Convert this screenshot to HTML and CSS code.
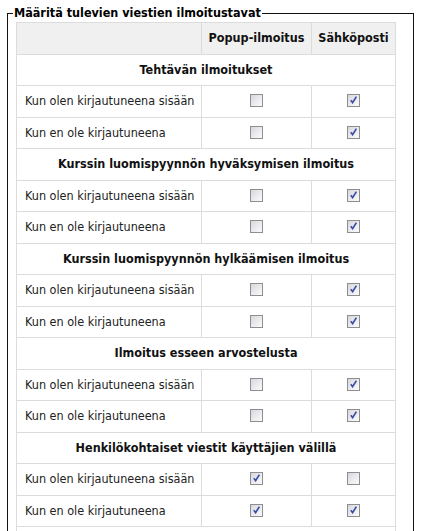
FILE: index.html
```html
<!DOCTYPE html>
<html lang="fi">
<head>
<meta charset="utf-8">
<title>Ilmoitusasetukset</title>
<link rel="stylesheet" href="styles.css">
</head>
<body>
<fieldset class="prefs">
  <legend class="prefs-legend">Määritä tulevien viestien ilmoitustavat</legend>
  <table class="grid">
    <colgroup>
      <col class="c-label">
      <col class="c-popup">
      <col class="c-mail">
    </colgroup>
    <thead>
      <tr class="head-row">
        <th></th>
        <th>Popup-ilmoitus</th>
        <th>Sähköposti</th>
      </tr>
    </thead>
    <tbody>
      <tr class="section"><th colspan="3">Tehtävän ilmoitukset</th></tr>
      <tr><td class="label">Kun olen kirjautuneena sisään</td><td class="box"><span class="cb"></span></td><td class="box"><span class="cb on"></span></td></tr>
      <tr><td class="label">Kun en ole kirjautuneena</td><td class="box"><span class="cb"></span></td><td class="box"><span class="cb on"></span></td></tr>

      <tr class="section"><th colspan="3">Kurssin luomispyynnön hyväksymisen ilmoitus</th></tr>
      <tr><td class="label">Kun olen kirjautuneena sisään</td><td class="box"><span class="cb"></span></td><td class="box"><span class="cb on"></span></td></tr>
      <tr><td class="label">Kun en ole kirjautuneena</td><td class="box"><span class="cb"></span></td><td class="box"><span class="cb on"></span></td></tr>

      <tr class="section"><th colspan="3">Kurssin luomispyynnön hylkäämisen ilmoitus</th></tr>
      <tr><td class="label">Kun olen kirjautuneena sisään</td><td class="box"><span class="cb"></span></td><td class="box"><span class="cb on"></span></td></tr>
      <tr><td class="label">Kun en ole kirjautuneena</td><td class="box"><span class="cb"></span></td><td class="box"><span class="cb on"></span></td></tr>

      <tr class="section"><th colspan="3">Ilmoitus esseen arvostelusta</th></tr>
      <tr><td class="label">Kun olen kirjautuneena sisään</td><td class="box"><span class="cb"></span></td><td class="box"><span class="cb on"></span></td></tr>
      <tr><td class="label">Kun en ole kirjautuneena</td><td class="box"><span class="cb"></span></td><td class="box"><span class="cb on"></span></td></tr>

      <tr class="section"><th colspan="3">Henkilökohtaiset viestit käyttäjien välillä</th></tr>
      <tr><td class="label">Kun olen kirjautuneena sisään</td><td class="box"><span class="cb on"></span></td><td class="box"><span class="cb"></span></td></tr>
      <tr><td class="label">Kun en ole kirjautuneena</td><td class="box"><span class="cb on"></span></td><td class="box"><span class="cb on"></span></td></tr>

      <tr class="section"><th colspan="3"></th></tr>
    </tbody>
  </table>
</fieldset>
</body>
</html>
```
FILE: styles.css
```css
html, body {
  margin: 0;
  padding: 0;
  background: #ffffff;
}

body {
  font-family: "DejaVu Sans Condensed", "DejaVu Sans", sans-serif;
  font-size: 12.5px;
  color: #222222;
}

.prefs {
  margin: 5px 8px 0 7px;
  padding: 1px 18px 0 8px;
  border: 1px solid #14120f;
  border-bottom: none;
  min-width: 0;
}

.prefs-legend {
  margin-left: -3px;
  padding: 0 1px;
  font-weight: bold;
  font-size: 12.5px;
  line-height: 16px;
  color: #000;
}

.grid {
  border-collapse: collapse;
  width: 379px;
  table-layout: fixed;
}

.c-label { width: 185px; }
.c-popup { width: 110px; }
.c-mail { width: 84px; }

.grid th,
.grid td {
  border: 1px solid #dcdcdc;
  padding: 7px 8px;
  line-height: 16.5px;
  height: 16.5px;
}

.head-row th {
  background: #f0f0f0;
  font-weight: bold;
  color: #111;
  text-align: center;
  white-space: nowrap;
  padding: 7px 4px;
}

.section th {
  font-weight: bold;
  color: #111;
  text-align: center;
  white-space: nowrap;
  padding: 7px 4px;
}

.label {
  text-align: left;
  white-space: nowrap;
}

.box {
  text-align: center;
  padding-right: 22px;
}

.cb {
  display: inline-block;
  width: 11px;
  height: 11px;
  border: 1px solid #8e8e8e;
  background: linear-gradient(135deg, #d6d6dc 0%, #ececf0 55%, #fbfbfb 100%);
  vertical-align: middle;
  position: relative;
  top: -1px;
}

.cb.on::after {
  content: "";
  position: absolute;
  left: 2px;
  top: 1px;
  width: 7px;
  height: 8px;
  background:
    no-repeat center/7px 8px
    url("data:image/svg+xml;utf8,<svg xmlns='http://www.w3.org/2000/svg' width='7' height='8' viewBox='0 0 7 8'><path d='M0.8 4.2 L2.6 6.6 L6.4 0.6' fill='none' stroke='%233b4fa6' stroke-width='1.7'/></svg>");
}
```
